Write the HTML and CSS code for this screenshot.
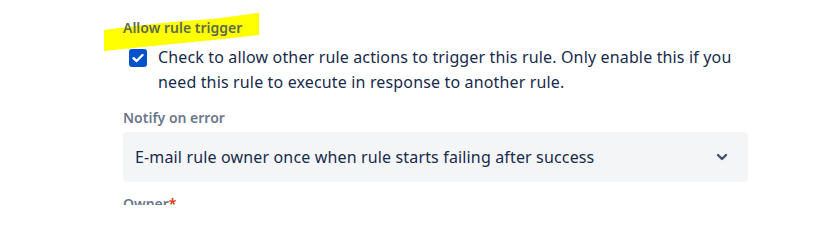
FILE: index.html
```html
<!DOCTYPE html>
<html>
<head>
<meta charset="utf-8">
<link rel="stylesheet" href="styles.css">
</head>
<body>
<div class="form">
  <p class="helper">Compare the rule history only with <a class="link">the logging</a></p>
  <div class="field">
    <div class="label-wrap">
      <svg class="highlight" width="170" height="45" viewBox="0 0 170 45"><polygon points="1,18 40,13 80,9 110,7 125,5 140,3 155,1 156,1 156,23 120,27 80,31 40,35 1,39" fill="#ffff00"/></svg>
      <span class="label">Allow rule trigger</span>
    </div>
    <div class="check-row">
      <span class="checkbox"><svg width="12" height="10" viewBox="0 0 12 10"><path d="M1.5 5.2 L4.6 8 L10.5 2" fill="none" stroke="#fff" stroke-width="2.4" stroke-linecap="round" stroke-linejoin="round"/></svg></span>
      <span class="check-text">Check to allow other rule actions to trigger this rule. Only enable this if you need this rule to execute in response to another rule.</span>
    </div>
  </div>
  <div class="field">
    <div class="label">Notify on error</div>
    <div class="select">
      <span class="select-text">E-mail rule owner once when rule starts failing after success</span>
      <svg class="chevron" width="12" height="8" viewBox="0 0 12 8"><path d="M2 2 L6 6 L10 2" fill="none" stroke="#42526e" stroke-width="2.4" stroke-linecap="round" stroke-linejoin="round"/></svg>
    </div>
  </div>
  <div class="field owner">
    <div class="label">Owner<span class="req">*</span></div>
  </div>
</div>
</body>
</html>
```
FILE: styles.css
```css
html, body {
  margin: 0;
  padding: 0;
  background: #ffffff;
  overflow: hidden;
}
body {
  font-family: "Noto Sans", "Open Sans", sans-serif;
  color: #172b4d;
  width: 821px;
  height: 205px;
}
.form {
  padding-left: 123px;
  width: 625px;
  display: flex;
  flex-direction: column;
}
.helper {
  margin: -20px 0 0 0;
  font-size: 14px;
  line-height: 20px;
  color: #6b778c;
  white-space: nowrap;
}
.link {
  color: #0052cc;
}
.field {
  display: flex;
  flex-direction: column;
}
.label-wrap {
  position: relative;
  margin-top: 20px;
}
.highlight {
  position: absolute;
  left: -20px;
  top: -8px;
}
.label {
  position: relative;
  font-size: 14px;
  line-height: 16px;
  font-weight: 600;
  color: #6b778c;
  display: block;
}
.label-wrap .label {
  color: #5e6a4f;
}
.check-row {
  display: flex;
  align-items: flex-start;
  gap: 11px;
  padding-left: 6px;
  margin-top: 9px;
}
.checkbox {
  flex: none;
  width: 18px;
  height: 18px;
  margin-top: 4px;
  background: #0052cc;
  border-radius: 3px;
  display: flex;
  align-items: center;
  justify-content: center;
}
.check-text {
  font-size: 16px;
  line-height: 24.5px;
  letter-spacing: 0.15px;
  color: #172b4d;
}
.field + .field {
  margin-top: 16px;
}
.select {
  margin-top: 6px;
  height: 50px;
  background: #f4f5f7;
  border-radius: 4px;
  display: flex;
  align-items: center;
  justify-content: space-between;
  padding: 0 20px 0 12px;
}
.select-text {
  font-size: 16px;
  line-height: 24px;
  letter-spacing: 0.15px;
  color: #172b4d;
}
.field.owner {
  margin-top: 14px;
}
.req {
  color: #de350b;
}
```
